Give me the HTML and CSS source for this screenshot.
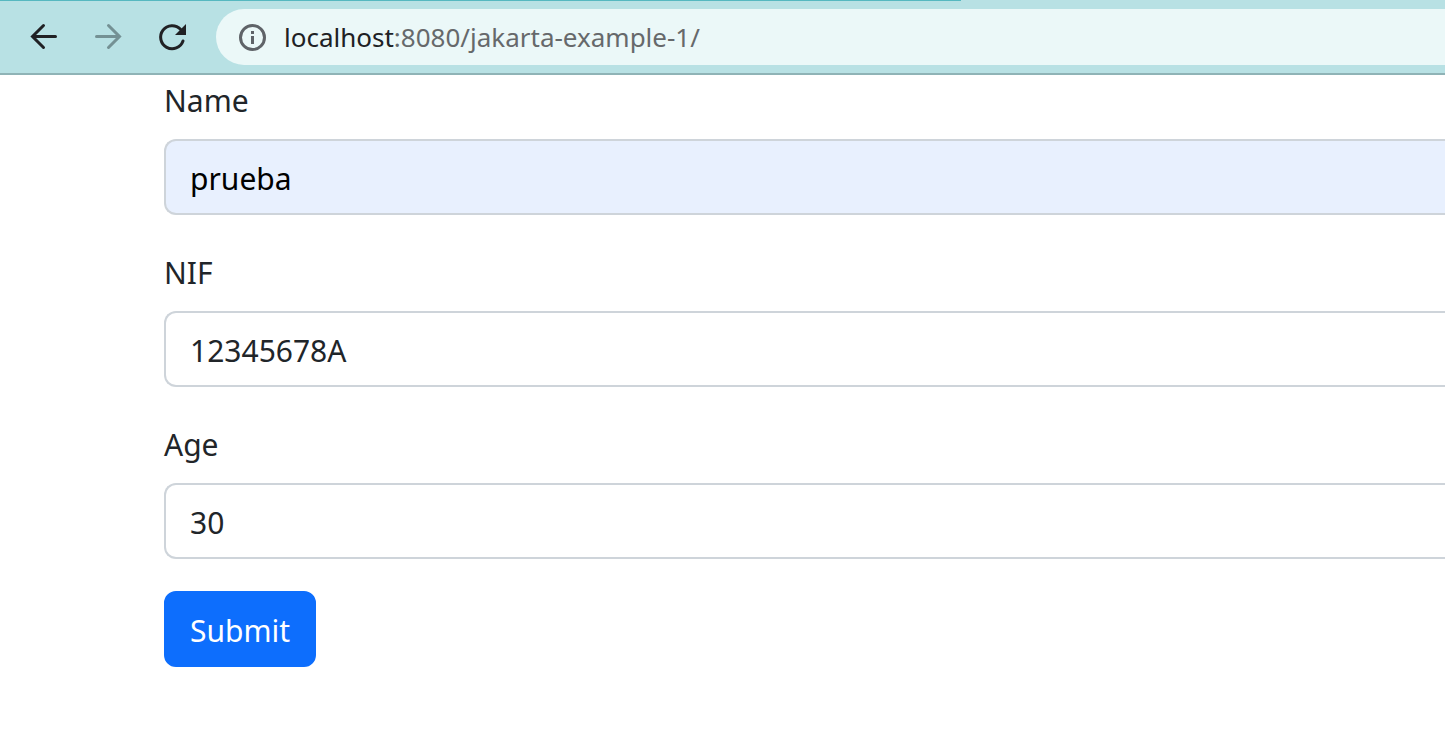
FILE: index.html
```html
<!DOCTYPE html>
<html lang="en">
<head>
<meta charset="utf-8">
<title>jakarta-example-1</title>
<link rel="stylesheet" href="styles.css">
</head>
<body>
<header class="toolbar">
  <div class="tab-line"></div>
  <nav class="toolbar-row">
    <button class="icon-button" type="button" aria-label="Back">
      <svg class="icon" viewBox="0 0 32 32"><path d="M27.500 15.500H5M15.500 4.500L4.500 15.500L15.500 26.500" stroke-linecap="round"/></svg>
    </button>
    <button class="icon-button icon-muted" type="button" aria-label="Forward">
      <svg class="icon" viewBox="0 0 32 32"><path d="M4.500 15.500H27M16.500 4.500L27.500 15.500L16.500 26.500" stroke-linecap="round"/></svg>
    </button>
    <button class="icon-button" type="button" aria-label="Reload">
      <svg class="icon" viewBox="0 0 32 32"><path d="M27 20A11.500 11.500 0 1 1 24.500 8.300" stroke-linecap="round"/><path class="solid" d="M30 3V14H19Z"/></svg>
    </button>
    <div class="address">
      <button class="icon-button icon-info" type="button" aria-label="Site information">
        <svg class="icon" viewBox="0 0 32 32"><circle cx="16.500" cy="16.500" r="12"/><path class="solid" d="M15 10h3v3h-3zM15 15h3v8h-3z"/></svg>
      </button>
      <a class="url" href="#"><span class="host">localhost</span>:8080/jakarta-example-1/</a>
    </div>
  </nav>
</header>
<main class="page">
  <form class="form">
    <div class="field">
      <label class="label" for="name">Name</label>
      <input class="input input-autofilled" id="name" type="text" value="prueba">
    </div>
    <div class="field">
      <label class="label" for="nif">NIF</label>
      <input class="input" id="nif" type="text" value="12345678A">
    </div>
    <div class="field">
      <label class="label" for="age">Age</label>
      <input class="input" id="age" type="text" value="30">
    </div>
    <button class="submit" type="submit">Submit</button>
  </form>
</main>
</body>
</html>
```

FILE: styles.css
```css
* { box-sizing: border-box; }

body {
  margin: 0;
  background: #fff;
  color: #212529;
  font-family: "Noto Sans", "Open Sans", sans-serif;
  font-size: 30px;
  line-height: 48px;
  overflow-x: hidden;
}

.toolbar {
  background: #b8e1e4;
  border-bottom: 2px solid #8fb3b6;
}

.tab-line {
  width: 66.5%;
  height: 1px;
  background: #56b8c0;
}

.toolbar-row {
  display: flex;
  align-items: center;
  gap: 32px;
  padding: 8px 0 8px 28px;
}

.icon-button {
  flex: none;
  display: block;
  width: 32px;
  height: 32px;
  padding: 0;
  border: 0;
  background: none;
  color: #202124;
}

.icon-muted { color: #749194; }
.icon-info { color: #5f6368; }

.icon {
  display: block;
  width: 32px;
  height: 32px;
  fill: none;
  stroke: currentColor;
  stroke-width: 3;
}

.icon .solid {
  fill: currentColor;
  stroke: none;
}

.address {
  flex: 1;
  display: flex;
  align-items: center;
  gap: 16px;
  height: 56px;
  margin-left: -4px;
  padding-left: 20px;
  border-radius: 28px 0 0 28px;
  background: #ebf8f8;
}

.url {
  color: #66696b;
  font-size: 26px;
  text-decoration: none;
  white-space: nowrap;
}

.host { color: #202124; }

.page { padding-left: 164px; }

.field { margin-bottom: 32px; }

.label {
  display: block;
  margin-bottom: 12px;
  line-height: 52px;
}

.input {
  display: block;
  width: 100%;
  height: 76px;
  padding: 14px 24px 12px;
  border: 2px solid #ced4da;
  border-right: 0;
  border-radius: 12px 0 0 12px;
  background: #fff;
  color: #212529;
  font: inherit;
}

.input-autofilled {
  background: #e8f0fe;
  color: #000;
}

.submit {
  height: 76px;
  padding: 14px 24px 10px;
  border: 2px solid #0d6efd;
  border-radius: 12px;
  background: #0d6efd;
  color: #fff;
  font: inherit;
}
```
